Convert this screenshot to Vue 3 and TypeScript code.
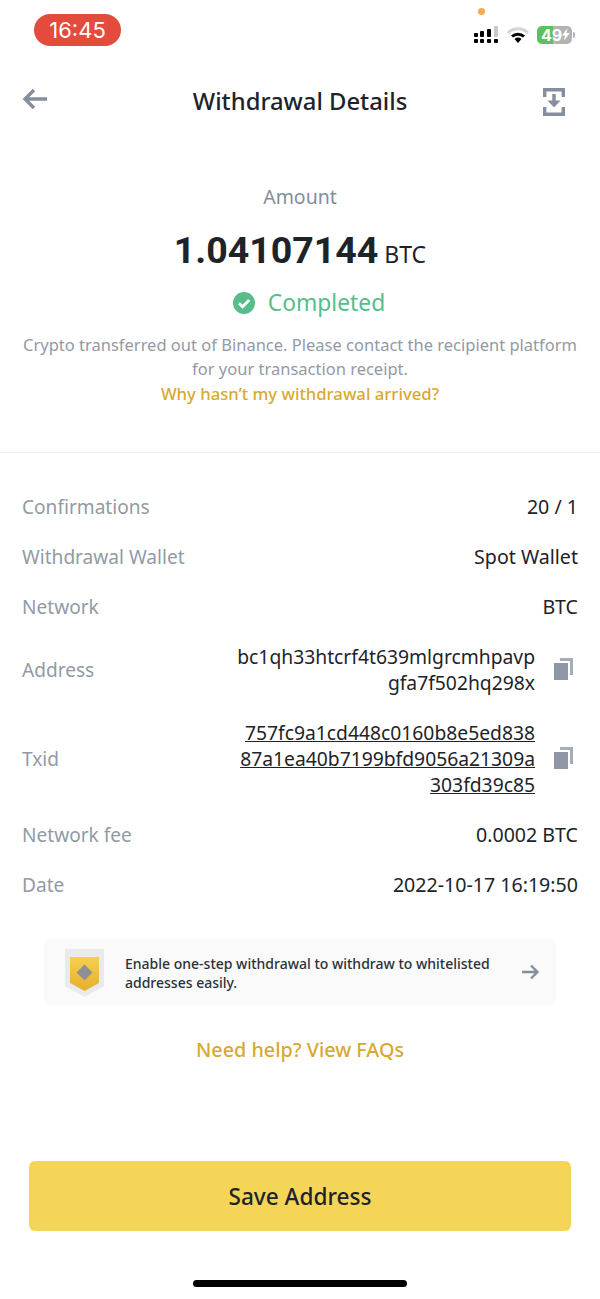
<template>
  <div class="page">
    <div class="status-bar">
      <div class="clock">16:45</div>
      <div class="status-icons">
        <span class="mic-dot"></span>
        <svg class="signal" width="26" height="19" viewBox="0 0 26 19">
          <g fill="#000">
            <rect x="1" y="8" width="4" height="4" rx="1" />
            <rect x="7" y="6" width="4" height="6" rx="1" />
            <rect x="14" y="4" width="4" height="8" rx="1" />
            <rect x="21" y="1" width="4" height="11" rx="1" fill="#c9c9c9" />
            <rect x="1" y="14" width="4" height="4" rx="1" />
            <rect x="7" y="14" width="4" height="4" rx="1" />
            <rect x="14" y="14" width="4" height="4" rx="1" />
            <rect x="21" y="14" width="4" height="4" rx="1" />
          </g>
        </svg>
        <svg class="wifi" width="24" height="18" viewBox="0 0 24 18">
          <path d="M2 7a14 14 0 0 1 20 0" fill="none" stroke="#d4d4d4" stroke-width="3" />
          <path d="M6 10.500a9 9 0 0 1 12 0" fill="none" stroke="#000" stroke-width="3" />
          <path d="M8.500 13a5 5 0 0 1 7 0L12 17z" fill="#000" />
        </svg>
        <div class="battery">
          <div class="battery-body">
            <span class="battery-text">49</span>
            <svg class="bolt" width="8" height="13" viewBox="0 0 8 13"><path d="M5.500 0 0 7.500h3L2 13l6-8H4.600z" fill="#fff" /></svg>
          </div>
          <span class="battery-cap"></span>
        </div>
      </div>
    </div>

    <header class="top-bar">
      <svg class="back" width="28" height="22" viewBox="0 0 28 22">
        <path d="M26 11H4M13 2l-9 9 9 9" fill="none" stroke="#848e9c" stroke-width="3.4" />
      </svg>
      <h1>Withdrawal Details</h1>
      <svg class="save" width="22" height="28" viewBox="0 0 22 28">
        <path d="M1.700 9V1.700h18.600V9M1.700 19v7.300h18.600V19" fill="none" stroke="#848e9c" stroke-width="3.4" />
        <path d="M11 6v8" stroke="#848e9c" stroke-width="3.4" />
        <path d="M4.500 12.500h13L11 19.500z" fill="#848e9c" />
      </svg>
    </header>

    <section class="summary">
      <div class="amount-label">Amount</div>
      <div class="amount"><strong>1.04107144</strong><span>BTC</span></div>
      <div class="state">
        <svg width="22" height="22" viewBox="0 0 22 22">
          <circle cx="11" cy="11" r="11" fill="#58bd8a" />
          <path d="M6 11.200l3.600 3.600L16.200 8" fill="none" stroke="#fff" stroke-width="2.800" />
        </svg>
        Completed
      </div>
      <p class="note">Crypto transferred out of Binance. Please contact the recipient platform for your transaction receipt.</p>
      <div class="why">Why hasn’t my withdrawal arrived?</div>
    </section>

    <section class="details">
      <div v-for="row in rows" :key="row.label" class="row">
        <span class="row-label">{{ row.label }}</span>
        <div class="row-value">
          <span :class="['value-text', { multi: row.copy, link: row.link }]">{{ row.value }}</span>
          <svg v-if="row.copy" class="copy" width="19" height="22" viewBox="0 0 19 22">
            <path d="M6 0h13v17h-3V3H6z" fill="#a6acb8" />
            <rect x="0" y="5" width="14" height="17" fill="#8f96a6" />
          </svg>
        </div>
      </div>
    </section>

    <div class="promo">
      <svg class="shield" width="39" height="48" viewBox="0 0 39 48">
        <defs>
          <linearGradient id="gold" x1="0" y1="0" x2="0" y2="1">
            <stop offset="0" stop-color="#f5d04f" />
            <stop offset="1" stop-color="#e6ae2e" />
          </linearGradient>
        </defs>
        <path d="M0 0h39v37L19.500 48 0 37z" fill="#e9eaec" />
        <path d="M5 8h29v26L19.500 42 5 34z" fill="url(#gold)" />
        <path d="M19.500 15.500l8 8-8 8-8-8z" fill="#8f8f94" />
      </svg>
      <p>Enable one-step withdrawal to withdraw to whitelisted addresses easily.</p>
      <svg class="promo-arrow" width="18" height="16" viewBox="0 0 18 16">
        <path d="M0 8h15M9 1.500 15.500 8 9 14.500" fill="none" stroke="#848e9c" stroke-width="2.400" />
      </svg>
    </div>

    <div class="faq">Need help? View FAQs</div>

    <button class="save-btn">Save Address</button>

    <div class="home-indicator"></div>
  </div>
</template>

<script setup lang="ts">
interface DetailRow {
  label: string
  value: string
  copy?: boolean
  link?: boolean
}

const rows: DetailRow[] = [
  { label: 'Confirmations', value: '20 / 1' },
  { label: 'Withdrawal Wallet', value: 'Spot Wallet' },
  { label: 'Network', value: 'BTC' },
  { label: 'Address', value: 'bc1qh33htcrf4t639mlgrcmhpavp gfa7f502hq298x', copy: true },
  {
    label: 'Txid',
    value: '757fc9a1cd448c0160b8e5ed838 87a1ea40b7199bfd9056a21309a 303fd39c85',
    copy: true,
    link: true,
  },
  { label: 'Network fee', value: '0.0002 BTC' },
  { label: 'Date', value: '2022-10-17 16:19:50' },
]
</script>

<style>
body {
  margin: 0;
  background: #fff;
}
</style>

<style scoped>
.page {
  width: 600px;
  height: 1299px;
  overflow: hidden;
  background: #fff;
  font-family: 'Noto Sans', sans-serif;
  color: #1e2329;
  display: flex;
  flex-direction: column;
}

.status-bar {
  height: 62px;
  padding: 14px 25px 0 34px;
  box-sizing: border-box;
  display: flex;
  justify-content: space-between;
  align-items: flex-start;
}

.clock {
  width: 87px;
  height: 32px;
  border-radius: 16px;
  background: #e34b3c;
  color: #fff;
  font: 22px/33px Inter, sans-serif;
  text-align: center;
}

.status-icons {
  position: relative;
  display: flex;
  align-items: center;
  gap: 7px;
  margin-top: 11px;
}

.mic-dot {
  position: absolute;
  left: 5px;
  top: -17px;
  width: 7px;
  height: 7px;
  border-radius: 50%;
  background: #f0ad4e;
}

.battery {
  display: flex;
  align-items: center;
  gap: 1px;
}

.battery-body {
  display: flex;
  align-items: center;
  justify-content: space-between;
  box-sizing: border-box;
  width: 35px;
  height: 18px;
  padding: 0 2px 0 4px;
  border-radius: 5px;
  background: linear-gradient(90deg, #5cc060 46%, #b3b3b3 46%);
}

.battery-text {
  color: #fff;
  font: 700 16px/18px Inter, sans-serif;
}

.battery-cap {
  width: 2px;
  height: 6px;
  border-radius: 0 2px 2px 0;
  background: #b3b3b3;
}

.top-bar {
  height: 80px;
  display: grid;
  grid-template-columns: 1fr auto 1fr;
  align-items: center;
  padding: 0 21px;
  margin-top: -3px;
}

.top-bar h1 {
  margin: 4px 0 0;
  text-align: center;
  font-size: 23.800px;
  font-weight: 500;
}

.save {
  justify-self: end;
  margin: 6px 14px 0 0;
}

.summary {
  padding: 44px 22px 0;
  height: 314px;
  box-sizing: border-box;
  text-align: center;
  border-bottom: 1px solid #eef0f2;
}

.amount-label {
  font-size: 19.500px;
  line-height: 28px;
  color: #848e9c;
}

.amount {
  display: flex;
  justify-content: center;
  align-items: baseline;
  gap: 6px;
  margin-top: 14px;
  line-height: 50px;
}

.amount strong {
  font-family: Roboto, sans-serif;
  font-size: 37.500px;
  font-weight: 700;
}

.amount span {
  font-size: 23px;
}

.state {
  display: flex;
  justify-content: center;
  align-items: center;
  gap: 13px;
  margin-top: 8px;
  padding-left: 18px;
  font-size: 22.800px;
  line-height: 32px;
  color: #58bd8a;
}

.note {
  margin: 14px 0 0;
  font-size: 16.500px;
  line-height: 24px;
  color: #929aa5;
}

.why {
  margin-top: 1px;
  font-size: 16.700px;
  line-height: 24px;
  font-weight: 500;
  color: #d8a932;
}

.details {
  padding: 41px 22px 0;
  display: flex;
  flex-direction: column;
  gap: 24px;
}

.row {
  display: flex;
  justify-content: space-between;
  align-items: center;
  font-size: 19.100px;
  line-height: 26px;
}

.row-label {
  color: #929aa5;
}

.row-value {
  display: flex;
  align-items: center;
  gap: 19px;
  font-size: 19.600px;
}

.value-text {
  display: block;
  text-align: right;
}

.value-text.multi {
  width: 298px;
  font-size: 19.300px;
  word-spacing: 300px;
}

.value-text.link {
  text-decoration: underline;
}

.copy {
  flex: none;
  margin: -3px 5px 0 0;
}

.promo {
  display: flex;
  align-items: center;
  box-sizing: border-box;
  width: 512px;
  height: 66px;
  margin: 41px 0 0 44px;
  padding: 0 16px 0 21px;
  background: #fafafa;
  border-radius: 6px;
}

.shield {
  flex: none;
  margin-top: 1px;
}

.promo p {
  flex: 1;
  margin: 2px 0 0 21px;
  font-size: 14px;
  line-height: 19px;
  font-weight: 500;
  color: #2b3139;
}

.promo-arrow {
  flex: none;
}

.faq {
  margin-top: 30px;
  text-align: center;
  font-size: 19.800px;
  line-height: 30px;
  font-weight: 500;
  color: #d8a932;
}

.save-btn {
  display: block;
  width: 542px;
  height: 70px;
  margin: 96px 0 0 29px;
  border: 0;
  border-radius: 6px;
  background: #f5d557;
  color: #1e2329;
  font: 500 22.600px 'Noto Sans', sans-serif;
}

.home-indicator {
  width: 214px;
  height: 7px;
  margin: 49px auto 0;
  border-radius: 4px;
  background: #000;
}
</style>
